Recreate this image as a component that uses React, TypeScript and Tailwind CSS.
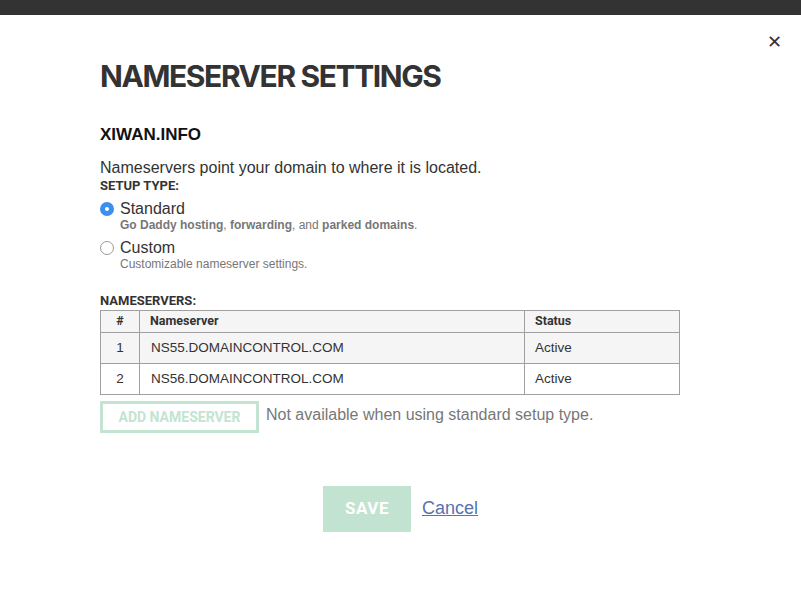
import React from "react";

export default function App() {
  return (
    <div className="w-[801px] h-[592px] bg-white relative overflow-hidden" style={{ fontFamily: "'Liberation Sans', Arial, sans-serif" }}>
      <div className="h-[15px] bg-[#333333]" />
      <button className="absolute left-[767px] top-[33px] text-[#333] text-[18px] leading-none font-['Roboto',sans-serif]">✕</button>
      <div className="pl-[100px] pt-[41px]">
        <h1 className="font-['Inter',sans-serif] font-bold text-[30px] leading-[40px] tracking-[-1.4px] text-[#333]">NAMESERVER SETTINGS</h1>
        <div className="mt-[29px] font-['Liberation_Sans',sans-serif] font-bold text-[17px] leading-[20px] text-[#111]">XIWAN.INFO</div>
        <p className="mt-[13px] text-[16px] leading-[20px] text-[#333]">Nameservers point your domain to where it is located.</p>
        <div className="mt-[1px] font-['Roboto',sans-serif] font-bold text-[13px] leading-[14px] text-[#333]">SETUP TYPE:</div>
        <div className="mt-[6px] flex items-start gap-[6px]">
          <span className="mt-[3px] w-[14px] h-[14px] rounded-full bg-[#3b8ff0] flex items-center justify-center">
            <span className="w-[4px] h-[4px] rounded-full bg-white" />
          </span>
          <div>
            <div className="text-[16px] leading-[19px] text-[#333]">Standard</div>
            <div className="mt-[1px] text-[12px] leading-[13px] text-[#777]"><b>Go Daddy hosting</b>, <b>forwarding</b>, and <b>parked domains</b>.</div>
          </div>
        </div>
        <div className="mt-[6px] flex items-start gap-[6px]">
          <span className="mt-[3px] w-[14px] h-[14px] rounded-full border border-[#999] bg-white" />
          <div>
            <div className="text-[16px] leading-[19px] text-[#333]">Custom</div>
            <div className="mt-[1px] text-[12px] leading-[13px] text-[#777]">Customizable nameserver settings.</div>
          </div>
        </div>
        <div className="mt-[22px] font-['Roboto',sans-serif] font-bold text-[13px] leading-[15px] text-[#333]">NAMESERVERS:</div>
        <table className="mt-[2px] w-[580px] border-collapse text-[#333]">
          <thead>
            <tr className="bg-[#f5f5f5] h-[22px]">
              <th className="w-[39px] border border-[#a0a0a0] text-center font-['Roboto',sans-serif] font-bold text-[12.5px]">#</th>
              <th className="w-[385px] border border-[#a0a0a0] text-left pl-[10px] font-['Roboto',sans-serif] font-bold text-[12.5px]">Nameserver</th>
              <th className="border border-[#a0a0a0] text-left pl-[10px] font-['Roboto',sans-serif] font-bold text-[12.5px]">Status</th>
            </tr>
          </thead>
          <tbody className="text-[13.5px]">
            <tr className="bg-[#f5f5f5] h-[31px]">
              <td className="border border-[#a0a0a0] text-center">1</td>
              <td className="border border-[#a0a0a0] pl-[11px]">NS55.DOMAINCONTROL.COM</td>
              <td className="border border-[#a0a0a0] pl-[10px]">Active</td>
            </tr>
            <tr className="bg-white h-[31px]">
              <td className="border border-[#a0a0a0] text-center">2</td>
              <td className="border border-[#a0a0a0] pl-[11px]">NS56.DOMAINCONTROL.COM</td>
              <td className="border border-[#a0a0a0] pl-[10px]">Active</td>
            </tr>
          </tbody>
        </table>
        <div className="mt-[6px] flex items-center gap-[7px]">
          <button className="w-[159px] h-[32px] border-[3px] border-[#c2e4d1] text-[#c2e4d1] font-['Roboto',sans-serif] font-bold text-[14px] leading-none">ADD NAMESERVER</button>
          <span className="text-[16px] text-[#777] -mt-[4px]">Not available when using standard setup type.</span>
        </div>
        <div className="mt-[53px] ml-[223px] flex items-center gap-[11px]">
          <button className="w-[88px] h-[46px] bg-[#c1e3cf] text-white font-['Roboto',sans-serif] font-bold text-[17px] tracking-[0.5px]">SAVE</button>
          <a href="#" className="text-[18px] text-[#5573b2] underline -mt-[2px]">Cancel</a>
        </div>
      </div>
    </div>
  );
}
